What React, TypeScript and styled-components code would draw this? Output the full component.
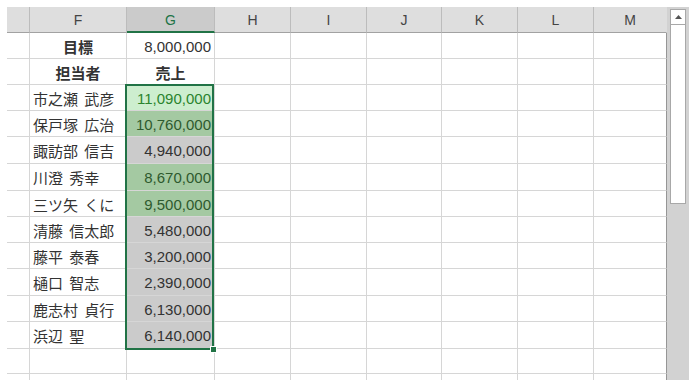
import React from "react";
import styled, { createGlobalStyle, css } from "styled-components";

const GlobalStyle = createGlobalStyle`
  html, body {
    margin: 0;
    padding: 0;
    background: #ffffff;
    overflow: hidden;
  }
  * { box-sizing: border-box; }
`;

const COLS = [
  { key: "E", width: 23 },
  { key: "F", width: 97 },
  { key: "G", width: 88 },
  { key: "H", width: 76 },
  { key: "I", width: 76 },
  { key: "J", width: 75 },
  { key: "K", width: 76 },
  { key: "L", width: 76 },
  { key: "M", width: 73 },
];

const ROW_HEIGHTS = [26, 26, 26, 26, 26, 27, 27, 26, 26, 26, 27, 26, 27, 25, 26];

type Fill = "none" | "active" | "hit" | "tint";

type Row = {
  label?: string;
  labelBold?: boolean;
  value?: string;
  valueBold?: boolean;
  fill?: Fill;
};

const ROWS: Row[] = [
  { label: "目標", labelBold: true, value: "8,000,000" },
  { label: "担当者", labelBold: true, value: "売上", valueBold: true },
  { label: "市之瀬 武彦", value: "11,090,000", fill: "active" },
  { label: "保戸塚 広治", value: "10,760,000", fill: "hit" },
  { label: "諏訪部 信吉", value: "4,940,000", fill: "tint" },
  { label: "川澄 秀幸", value: "8,670,000", fill: "hit" },
  { label: "三ツ矢 くに", value: "9,500,000", fill: "hit" },
  { label: "清藤 信太郎", value: "5,480,000", fill: "tint" },
  { label: "藤平 泰春", value: "3,200,000", fill: "tint" },
  { label: "樋口 智志", value: "2,390,000", fill: "tint" },
  { label: "鹿志村 貞行", value: "6,130,000", fill: "tint" },
  { label: "浜辺 聖", value: "6,140,000", fill: "tint" },
  {},
  {},
];

const Page = styled.div`
  height: 380px;
  padding: 7px 0 0 7px;
  overflow: hidden;
`;

const Sheet = styled.div`
  display: flex;
  align-items: stretch;
  height: 373px;
`;

const Grid = styled.div`
  position: relative;
  display: grid;
  grid-template-columns: ${COLS.map((c) => `${c.width}px`).join(" ")};
  grid-template-rows: ${ROW_HEIGHTS.map((h) => `${h}px`).join(" ")};
  align-content: start;
`;

const HeaderCell = styled.div<{ $selected?: boolean; $last?: boolean }>`
  display: flex;
  align-items: center;
  justify-content: center;
  padding-top: 1px;
  background: ${(p) => (p.$selected ? "#cbcbcb" : "#dedede")};
  border-right: 1px solid ${(p) => (p.$last ? "#dedede" : "#bcbcbc")};
  border-bottom: ${(p) => (p.$selected ? "2px solid #217346" : "1px solid #a2a2a2")};
  font-family: "Liberation Sans", Arial, sans-serif;
  font-size: 14px;
  color: ${(p) => (p.$selected ? "#217346" : "#444444")};
`;

const fills: Record<Fill, string> = {
  none: "#ffffff",
  active: "#cdeecf",
  hit: "#a4c9a2",
  tint: "#cbcbcb",
};

const inkFor: Record<Fill, string> = {
  none: "#333333",
  active: "#2a842e",
  hit: "#2e5a2e",
  tint: "#333333",
};

const Cell = styled.div<{
  $fill?: Fill;
  $align?: "left" | "center" | "right";
  $bold?: boolean;
  $edge?: boolean;
  $cjk?: boolean;
}>`
  display: flex;
  align-items: center;
  justify-content: ${(p) =>
    p.$align === "right" ? "flex-end" : p.$align === "center" ? "center" : "flex-start"};
  padding: 1px 3px 0 3px;
  overflow: hidden;
  white-space: nowrap;
  background: ${(p) => fills[p.$fill ?? "none"]};
  color: ${(p) => inkFor[p.$fill ?? "none"]};
  border-right: 1px solid ${(p) => (p.$edge ? "#969696" : "#d6d6d6")};
  border-bottom: 1px solid #d6d6d6;
  font-weight: ${(p) => (p.$bold ? 700 : 400)};
  ${(p) =>
    p.$cjk
      ? css`
          font-family: "Noto Sans CJK JP", "Noto Sans", sans-serif;
          font-size: 15px;
          word-spacing: 3px;
        `
      : css`
          font-family: "Liberation Sans", "Noto Sans CJK JP", sans-serif;
          font-size: 15px;
        `}
`;

const Selection = styled.div`
  position: absolute;
  left: 118px;
  top: 77px;
  width: 89px;
  height: 266px;
  border: 2px solid #217346;
  pointer-events: none;
`;

const FillHandle = styled.div`
  position: absolute;
  right: -5px;
  bottom: -5px;
  width: 7px;
  height: 7px;
  background: #217346;
  border: 1px solid #ffffff;
`;

const ScrollBar = styled.div`
  width: 22px;
  background: #d2d2d2;
  display: flex;
  flex-direction: column;
  align-items: center;
  padding-top: 2px;
`;

const ArrowButton = styled.div`
  width: 16px;
  height: 16px;
  background: #ffffff;
  border: 1px solid #a8a8a8;
  display: flex;
  align-items: center;
  justify-content: center;
`;

const Thumb = styled.div`
  width: 16px;
  height: 180px;
  margin-top: -1px;
  background: #ffffff;
  border: 1px solid #a8a8a8;
`;

function UpArrow() {
  return (
    <svg width="7" height="4" viewBox="0 0 7 4">
      <path d="M0 4 L3.5 0 L7 4 Z" fill="#555555" />
    </svg>
  );
}

export default function App() {
  const last = COLS.length - 1;
  return (
    <>
      <GlobalStyle />
      <Page>
        <Sheet>
          <Grid>
            {COLS.map((c, i) => (
              <HeaderCell key={c.key} $selected={c.key === "G"} $last={i === last}>
                {c.key === "E" ? "" : c.key}
              </HeaderCell>
            ))}
            {ROWS.map((r, ri) =>
              COLS.map((c, ci) => {
                const edge = ci === last;
                if (c.key === "F") {
                  return (
                    <Cell
                      key={`${ri}-${c.key}`}
                      $cjk
                      $bold={r.labelBold}
                      $align={r.labelBold ? "center" : "left"}
                    >
                      {r.label}
                    </Cell>
                  );
                }
                if (c.key === "G") {
                  return (
                    <Cell
                      key={`${ri}-${c.key}`}
                      $cjk={r.valueBold}
                      $bold={r.valueBold}
                      $align={r.valueBold ? "center" : "right"}
                      $fill={r.fill}
                    >
                      {r.value}
                    </Cell>
                  );
                }
                return <Cell key={`${ri}-${c.key}`} $edge={edge} />;
              })
            )}
            <Selection>
              <FillHandle />
            </Selection>
          </Grid>
          <ScrollBar>
            <ArrowButton>
              <UpArrow />
            </ArrowButton>
            <Thumb />
          </ScrollBar>
        </Sheet>
      </Page>
    </>
  );
}
